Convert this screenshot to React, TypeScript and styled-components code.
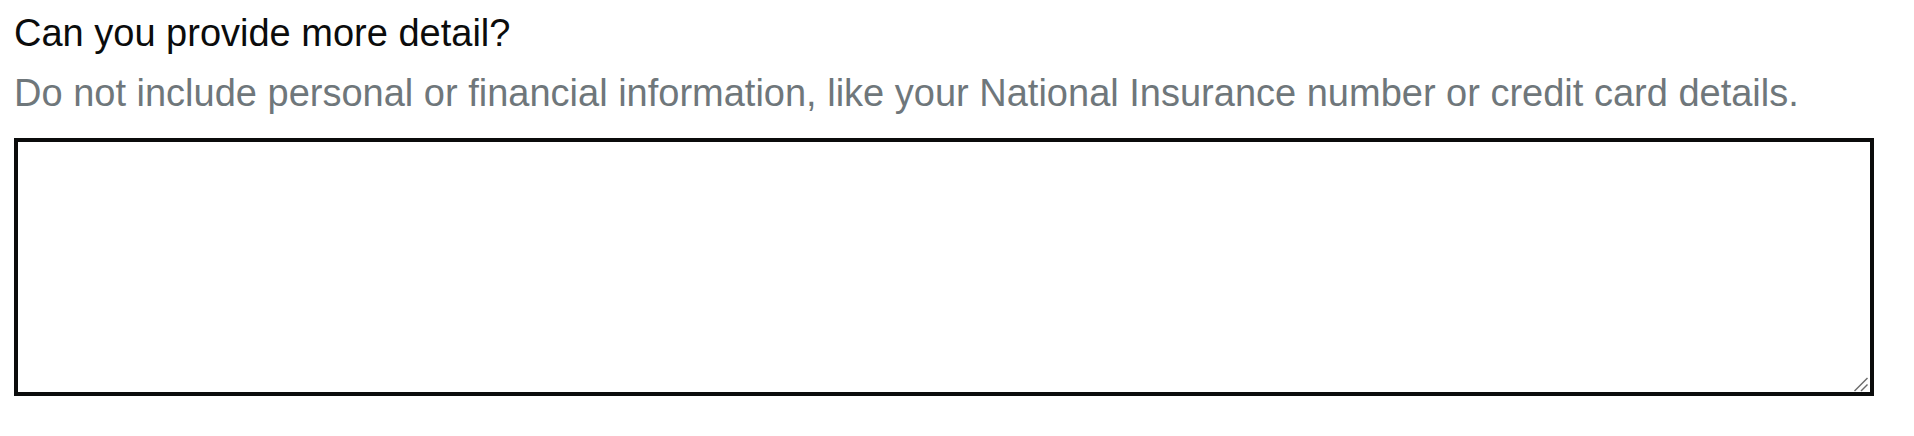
import React from "react";
import styled, { createGlobalStyle } from "styled-components";

const Global = createGlobalStyle`
  html, body { margin: 0; padding: 0; background: #fff; }
  body { font-family: "Liberation Sans", Arial, sans-serif; }
`;

const Field = styled.div`
  display: flex;
  flex-direction: column;
  align-items: flex-start;
  padding: 10px 40px 0 14px;
`;

const Label = styled.label`
  font-size: 38px;
  line-height: 46px;
  color: #0b0c0c;
`;

const Hint = styled.div`
  font-size: 38px;
  line-height: 46px;
  color: #6f777b;
  margin-top: 14px;
`;

const AreaWrap = styled.div`
  position: relative;
  margin-top: 22px;
  display: flex;
`;

const TextArea = styled.textarea`
  box-sizing: border-box;
  width: 1860px;
  height: 258px;
  border: 4px solid #0b0c0c;
  border-radius: 0;
  padding: 5px;
  font-family: "Liberation Sans", Arial, sans-serif;
  font-size: 38px;
  outline: none;
  resize: vertical;
  display: block;
`;

const Grip = styled.svg`
  position: absolute;
  right: 4px;
  bottom: 4px;
  width: 16px;
  height: 16px;
  background: #fff;
  pointer-events: none;
`;

export default function App() {
  return (
    <>
      <Global />
      <Field>
        <Label htmlFor="detail">Can you provide more detail?</Label>
        <Hint>
          Do not include personal or financial information, like your National Insurance number or credit card details.
        </Hint>
        <AreaWrap>
          <TextArea id="detail" />
          <Grip viewBox="0 0 16 16" aria-hidden="true">
            <line x1="0.5" y1="15" x2="13.5" y2="2" stroke="#6b6b6b" strokeWidth="1.4" />
            <line x1="7" y1="15" x2="13.5" y2="8.5" stroke="#6b6b6b" strokeWidth="1.4" />
          </Grip>
        </AreaWrap>
      </Field>
    </>
  );
}
